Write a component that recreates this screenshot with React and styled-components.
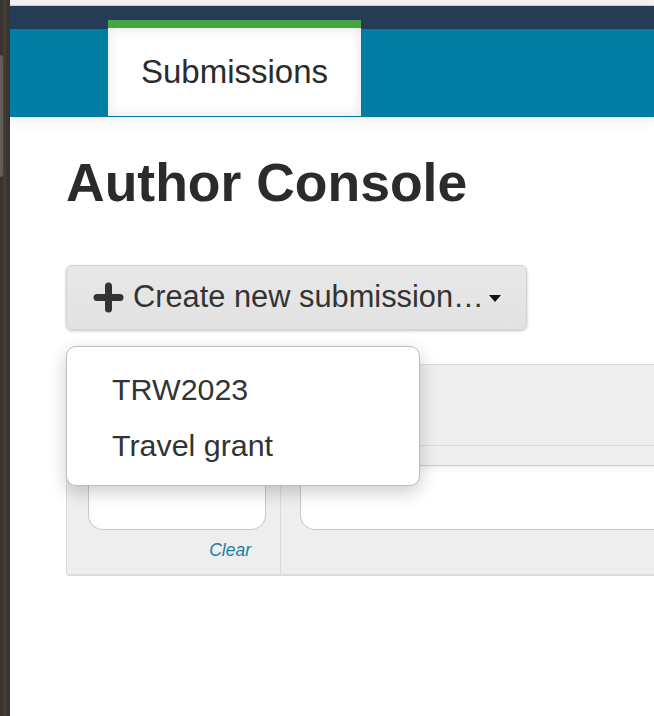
import React from 'react'
import styled, { createGlobalStyle } from 'styled-components'

const GlobalStyle = createGlobalStyle`
  html, body {
    margin: 0;
    padding: 0;
    background: #fff;
    overflow: hidden;
  }
  body {
    font-family: "Liberation Sans", Arial, sans-serif;
    color: #333;
  }
`

const PlusIcon = () => (
  <svg width='31' height='31' viewBox='0 0 31 31'>
    <path d='M15.5 4v23M4 15.5h23' stroke='#333' strokeWidth='7' strokeLinecap='round' fill='none' />
  </svg>
)

const App = () => {
  return (
    <Frame>
      <GlobalStyle />
      <Strip>
        <Handle />
      </Strip>
      <Page>
        <TopBand />
        <Header>
          <Tab>Submissions</Tab>
        </Header>

        <Main>
          <Title>Author Console</Title>

          <Actions>
            <CreateButton>
              <PlusIcon />
              <Label>Create new submission…</Label>
              <Caret />
            </CreateButton>
            <Menu>
              <MenuItem>TRW2023</MenuItem>
              <MenuItem>Travel grant</MenuItem>
            </Menu>
          </Actions>

          <Panel>
            <HeadRow />
            <SubRow />
            <BodyRow>
              <LeftCell>
                <Field />
                <ClearLink>Clear</ClearLink>
              </LeftCell>
              <RightCell>
                <Field />
              </RightCell>
            </BodyRow>
          </Panel>
        </Main>
      </Page>
    </Frame>
  )
}

const Frame = styled.div`
  display: flex;
  min-height: 716px;
  width: 654px;
  overflow: hidden;
`

const Strip = styled.div`
  flex: 0 0 10px;
  padding-top: 55px;
  box-sizing: border-box;
  background:
    linear-gradient(90deg, rgba(0, 0, 0, 0.06) 0 3px, rgba(255, 255, 255, 0.03) 3px 6px, rgba(0, 0, 0, 0.05) 6px 10px),
    #3d3732;
`

const Handle = styled.div`
  width: 3px;
  height: 122px;
  background: #625d57;
  border-radius: 0 3px 3px 0;
`

const Page = styled.div`
  flex: 1;
  min-width: 0;
  overflow: hidden;
`

const TopBand = styled.div`
  height: 5px;
  background: #f3f3f3;
  border-bottom: 1px solid #d2d2d2;
`

const Header = styled.div`
  display: flex;
  align-items: flex-end;
  height: 96px;
  padding: 14px 0 0 98px;
  background: linear-gradient(180deg, #253c57 0 23px, #007ea4 23px);
  border-bottom: 1px solid #0079a0;
  box-shadow: 0 4px 14px rgba(0, 0, 0, 0.07);
  position: relative;
  z-index: 1;
`

const Tab = styled.div`
  display: flex;
  align-items: center;
  justify-content: center;
  width: 253px;
  height: 88px;
  border-top: 8px solid #45a648;
  background: #fff;
  box-shadow: inset 0 0 12px rgba(0, 0, 0, 0.12);
  font-size: 33px;
  color: #2b2b2b;
`

const Main = styled.div`
  padding: 0 0 0 56px;
`

const Title = styled.h1`
  margin: 37px 0 52px;
  font-size: 53.5px;
  line-height: 1.1;
  font-weight: bold;
  color: #2b2b2b;
`

const Actions = styled.div`
  position: relative;
  z-index: 2;
`

const CreateButton = styled.button`
  display: flex;
  align-items: center;
  justify-content: flex-start;
  height: 65px;
  width: 461px;
  box-sizing: border-box;
  padding: 0 10px 0 26px;
  border: 1px solid #d4d4d4;
  border-radius: 6px;
  background: linear-gradient(180deg, #e8e8e8, #e2e2e2);
  box-shadow: 0 1px 3px rgba(0, 0, 0, 0.25);
  font-family: inherit;
  font-size: 30.8px;
  color: #333;

  svg {
    flex: 0 0 31px;
    margin: 1px 9px 0 0;
  }
`

const Label = styled.span`
  white-space: nowrap;
`

const Caret = styled.span`
  flex: 0 0 auto;
  width: 0;
  height: 0;
  margin: 2px 0 0 5px;
  border-top: 7px solid #111;
  border-left: 6.5px solid transparent;
  border-right: 6.5px solid transparent;
`

const Menu = styled.div`
  position: absolute;
  top: 81px;
  left: 0;
  width: 354px;
  box-sizing: border-box;
  padding: 14px 0 12px;
  background: #fff;
  border: 1px solid #bdbdbd;
  border-radius: 10px;
  box-shadow: 0 6px 18px rgba(0, 0, 0, 0.2);
`

const MenuItem = styled.div`
  padding: 0 45px;
  font-size: 30.4px;
  line-height: 56px;
  color: #333;
`

const Panel = styled.div`
  margin-top: 34px;
  width: 700px;
  background: #eee;
  border: 1px solid #dcdcdc;
  border-bottom-width: 2px;
  border-radius: 4px;
`

const HeadRow = styled.div`
  height: 80px;
  border-bottom: 1px solid #dadada;
`

const SubRow = styled.div`
  height: 19px;
  border-bottom: 1px solid #cbcbcb;
`

const BodyRow = styled.div`
  display: grid;
  grid-template-columns: 214px 1fr;
`

const LeftCell = styled.div`
  display: flex;
  flex-direction: column;
  padding: 0 14px 11px 21px;
  border-right: 1px solid #dadada;
`

const RightCell = styled.div`
  padding-left: 19px;
`

const Field = styled.div`
  height: 63px;
  background: #fff;
  border: 1px solid #c9c9c9;
  border-top: none;
  border-radius: 0 0 15px 15px;
  box-shadow: inset 0 6px 10px -6px rgba(0, 0, 0, 0.12);
`

const ClearLink = styled.a`
  align-self: flex-end;
  margin: 8px 15px 0 0;
  font-size: 17.5px;
  line-height: 1.43;
  font-style: italic;
  color: #1b7ea6;
`

export default App
